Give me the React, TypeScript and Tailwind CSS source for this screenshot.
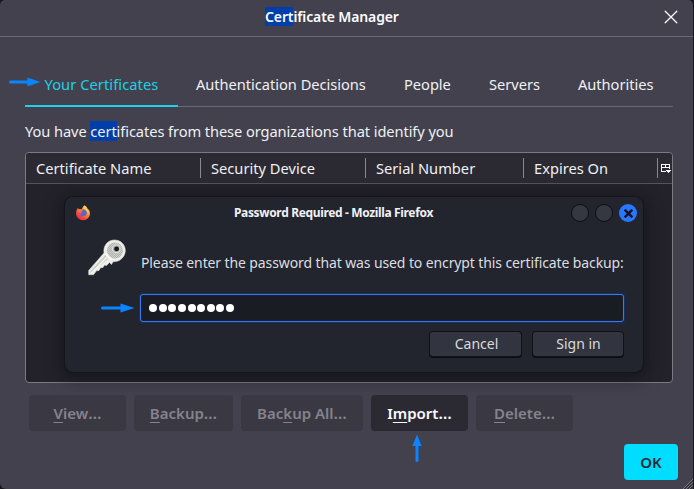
import React from "react";

const tabs = [
  { label: "Authentication Decisions", box: "ml-[18px] w-[170px]" },
  { label: "People", box: "ml-[38px] w-[47px]" },
  { label: "Servers", box: "ml-[38px] w-[51px]" },
  { label: "Authorities", box: "ml-[38px] w-[76px]" },
];

function Arrow({ className }: { className: string }) {
  return (
    <svg viewBox="0 0 34 10" preserveAspectRatio="none" className={className}>
      <path d="M1.5 5H22" stroke="#0a84ff" strokeWidth="3" strokeLinecap="round" />
      <path d="M19.5 0.4L33.5 5L19.5 9.6Z" fill="#0a84ff" />
    </svg>
  );
}

function Firefox() {
  return (
    <svg viewBox="0 0 16 16" className="size-4 shrink-0">
      <defs>
        <linearGradient id="fx" x1="0.85" y1="0.05" x2="0.2" y2="0.95">
          <stop offset="0" stopColor="#ffd94d" />
          <stop offset="0.4" stopColor="#ff8f35" />
          <stop offset="0.75" stopColor="#f5473f" />
          <stop offset="1" stopColor="#e0304f" />
        </linearGradient>
      </defs>
      <path d="M9.4.6c1.5.7 2.3 1.7 2.8 2.9 1.2.5 2.8 2.5 2.8 5A7 6.7 0 0 1 1 8.5C1 6 2 4.2 3 3.1l.6 1.5c.9-.5 2-.5 3-.2C7.4 2.8 8.1 1.7 9.4.6Z" fill="url(#fx)" />
      <path d="M7.7 4.3c2.7-.2 4.3 1.7 4.1 4-.2 2-1.9 3.2-3.8 3-2-.2-3.4-1.6-3.3-3.1.8.4 1.5.4 2.3-.1-.9-.5-.9-1.3-.3-1.8.6-.4 1-.9 1-2Z" fill="#5968c8" />
      <path d="M9.4.6c1.5.7 2.3 1.7 2.8 2.9 1.3 1 1.8 3 1 5-.8-2.3-1.9-3.2-3.6-4C8.2 3.7 8.2 1.8 9.4.6Z" fill="#ffc95a" />
      <path d="M3 3.1l.6 1.5c1.1-.5 2.3-.4 3.3.1C6.5 6 5.3 6.4 4.5 7.8 3.2 6.6 2.7 5 3 3.1Z" fill="#ff7139" />
    </svg>
  );
}

function Key() {
  return (
    <svg viewBox="0 0 38 37" className="h-[37px] w-[38px] shrink-0">
      <defs>
        <pattern id="grain" width="2" height="2" patternUnits="userSpaceOnUse">
          <rect width="2" height="2" fill="#cfd0cb" />
          <rect width="1" height="1" fill="#b0b2ad" />
          <rect x="1" y="1" width="1" height="1" fill="#b0b2ad" />
        </pattern>
      </defs>
      <path
        d="M16 14C15 6.500 20 1 26.500 1S37.300 6 37.300 11.500 33 22 27.500 22.500L25 22.800 23.500 25.500 21.500 23.500 18.500 26.500 16.500 26 15 28.500 12.500 28.700 11 31.500 8.500 31.700 5.500 35.700H.7V31.500Z"
        fill="#efefea"
        stroke="#dcddd7"
        strokeWidth="0.6"
      />
      <ellipse cx="26.9" cy="11.5" rx="8" ry="8" fill="url(#grain)" />
      <path d="M17.500 16L2.500 32V34L20 20Z" fill="#c9cbc3" />
      <path d="M19 18L4 33.500" stroke="#f7f7f3" strokeWidth="1.4" />
      <path d="M18 15l6 6" stroke="#fff" strokeWidth="1.3" />
      <circle cx="28.3" cy="9.700" r="4.200" fill="#e9e9e4" />
      <circle cx="28.3" cy="9.700" r="3.400" fill="#aeb0ac" />
      <circle cx="28.6" cy="9.900" r="2.400" fill="#15181c" />
    </svg>
  );
}

function ActionButton({ pre = "", k, post, box, active = false }: { pre?: string; k: string; post: string; box: string; active?: boolean }) {
  return (
    <button
      className={`${box} ${active ? "bg-[#2b2a33] text-[#fbfbfe]" : "bg-[#3a3842] text-[#85838d]"} flex h-9 items-center justify-center rounded text-[15px] font-semibold whitespace-pre`}
    >
      <span>
        {pre}
        <span className="underline decoration-1 underline-offset-[3px] [text-decoration-skip-ink:none]">{k}</span>
        {post}<span className="text-[16px] leading-5">…</span>
      </span>
    </button>
  );
}

function PasswordDialog() {
  return (
    <div className="ml-[39px] mt-[13px] flex h-[175px] w-[578px] flex-col rounded-lg bg-[#23252e] shadow-[0_0_0_1px_#14151a,0_3px_16px_3px_rgba(10,10,15,0.5)]">
      <div className="flex h-8 items-center pl-[10px] pr-[6px]">
        <Firefox />
        <div className="ml-[143px] w-[200px] text-[12px] font-bold tracking-[-0.35px] whitespace-nowrap text-[#f1f1f3]">Password Required - Mozilla Firefox</div>
        <div className="ml-auto flex gap-[6px]">
          <div className="size-[18px] rounded-full border border-[#0e0f13] bg-[#353843]" />
          <div className="size-[18px] rounded-full border border-[#0e0f13] bg-[#353843]" />
          <div className="flex size-[18px] items-center justify-center rounded-full bg-[#2777ff]">
            <svg viewBox="0 0 8 8" className="size-[9px]">
              <path d="M0.6 0.6l6.800 6.800M7.400 0.6L0.6 7.400" stroke="#10131c" strokeWidth="2.1" />
            </svg>
          </div>
        </div>
      </div>
      <div className="flex h-[65px] pl-[23px] pt-[10px]">
        <Key />
        <div className="ml-[15px] pt-[14px] text-[14px] leading-5 tracking-[-0.11px] whitespace-nowrap text-[#dcdde0]">
          Please enter the password that was used to encrypt this certificate backup:
        </div>
      </div>
      <div className="flex items-center pl-[36px]">
        <Arrow className="h-[10px] w-[34px]" />
        <div className="ml-[5px] flex h-7 w-[484px] items-center gap-[1.65px] rounded-[3px] border border-[#367bf0] bg-[#1a1c23] pl-[8px] shadow-[0_0_0_1px_#14306a]">
          {Array.from({ length: 9 }, (_, i) => (
            <span key={i} className="size-2 rounded-full bg-white" />
          ))}
        </div>
      </div>
      <div className="mt-[10px] flex justify-end gap-[12px] pr-[20px]">
        <button className="h-6 w-[91px] rounded-[3px] bg-[#323540] pl-[2px] text-[14px] leading-6 text-[#d9dadd] shadow-[0_0_0_1px_#111217,0_1px_0_1px_#0c0d11]">Cancel</button>
        <button className="h-6 w-[90px] rounded-[3px] bg-[#323540] pl-px text-[14px] leading-6 text-[#d9dadd] shadow-[0_0_0_1px_#111217,0_1px_0_1px_#0c0d11]">Sign in</button>
      </div>
    </div>
  );
}

export default function App() {
  return (
    <div className="h-[489px] w-[694px] overflow-hidden bg-[#17161c] font-['Noto_Sans',sans-serif] text-[14.67px] text-[#f0f0f4]">
      <div className="relative flex h-[489px] w-[693px] flex-col rounded-t-[5px] rounded-bl-[6px] bg-[#42414d]">
        <header className="flex h-[37px] items-center border-b border-[#6a6973] pb-[3px]">
          <h1 className="ml-[265px] w-[134px] text-[14px] font-semibold leading-[19px] tracking-[-0.12px] whitespace-nowrap text-[#fbfbfe]">
            <span className="inline-block bg-[#003eaa]">Cert</span>ificate Manager
          </h1>
          <svg viewBox="0 0 14 14" className="ml-[265px] size-[14px]">
            <path d="M1.2 1.2l11.600 11.600M12.800 1.200L1.200 12.800" stroke="#fbfbfe" strokeWidth="1.3" strokeLinecap="round" />
          </svg>
        </header>

        <nav className="ml-[25px] mt-[27px] flex h-[43px] w-[648px] items-center border-b border-[#6a6973] tracking-[-0.04px] whitespace-nowrap">
          <div className="mb-[-1px] h-[43px] w-[153px] border-b-[2px] border-[#20d0e6] pl-[19.500px] leading-[41px] tracking-[0.07px] text-[#20d0e6]">Your Certificates</div>
          {tabs.map((t) => (
            <div key={t.label} className={`${t.box} pb-[2px] leading-[39px]`}>{t.label}</div>
          ))}
        </nav>
        <Arrow className="absolute left-[9px] top-[77px] h-[10px] w-[32px]" />

        <p className="ml-[25px] mt-[14px] h-5 leading-5 tracking-[-0.09px] whitespace-nowrap">
          You have <span className="inline-block bg-[#003eaa]">cert</span>ificates from these organizations that identify you
        </p>

        <section className="ml-[25px] mt-[11px] flex h-[231px] w-[648px] flex-col rounded border border-[#7c7b84] bg-[#23222b]">
          <div className="flex h-[31px] items-center rounded-t border-b border-[#54535c] bg-[#2b2a33] whitespace-nowrap">
            <div className="w-[174px] pl-[10px]">Certificate Name</div>
            <div className="h-5 w-[165px] border-l border-[#8a8992] pl-[10px] leading-5">Security Device</div>
            <div className="h-5 w-[158px] border-l border-[#8a8992] pl-[10px] leading-5">Serial Number</div>
            <div className="h-5 w-[134px] border-l border-[#8a8992] pl-[10px] leading-5">Expires On</div>
            <div className="flex h-5 items-center border-l border-[#8a8992] pl-[2px]">
              <svg viewBox="0 0 12 10" className="h-[10px] w-[12px]" shapeRendering="crispEdges">
                <path d="M1 1h9v1H1zM1 4h9v1H1zM1 1h1v8H1zM9 1h1v5H9zM5 1h1v4H5zM1 8h5v1H1z" fill="#fbfbfe" />
                <path d="M6 7h5v1H6zM7 8h3v1H7zM8 9h1v1H8z" fill="#fbfbfe" />
              </svg>
            </div>
          </div>
          <PasswordDialog />
        </section>

        <div className="ml-[29px] mt-3 flex gap-2">
          <ActionButton k="V" post="iew" box="w-[97px]" />
          <ActionButton k="B" post="ackup" box="w-[99px]" />
          <ActionButton pre="Bac" k="k" post="up All" box="w-[122px]" />
          <ActionButton pre="I" k="m" post="port" box="w-[97px]" active />
          <ActionButton k="D" post="elete" box="w-[97px]" />
        </div>
        <Arrow className="absolute left-[403px] top-[443px] h-[10px] w-[28px] -rotate-90" />
        <button className="ml-[624px] mt-[13px] h-9 w-[54px] rounded bg-[#00ddff] text-[15px] font-semibold text-[#2b2a33]">OK</button>
        <svg viewBox="0 0 10 10" className="absolute bottom-0 right-0 size-[10px]">
          <path d="M0 10L10 0M3 10L10 3M6 10L10 6" stroke="#8a8992" strokeWidth="0.8" />
          <path d="M1.5 10L10 1.5M4.5 10L10 4.5M7.5 10L10 7.5" stroke="#24232b" strokeWidth="0.9" />
        </svg>
      </div>
    </div>
  );
}
